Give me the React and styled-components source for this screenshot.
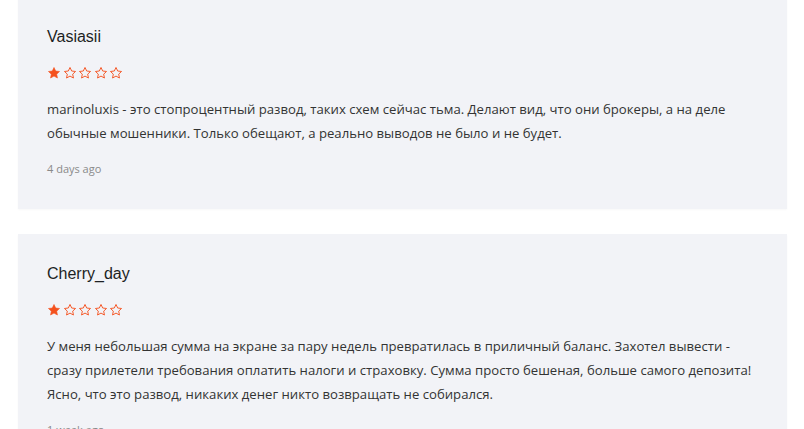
import React from "react"
import styled, { createGlobalStyle } from "styled-components"

const GlobalStyle = createGlobalStyle`
  body {
    margin: 0;
    background: #ffffff;
    font-family: "Open Sans", sans-serif;
  }
`

const ListStyles = styled.div`
  display: flex;
  flex-direction: column;
  gap: 25px;
  width: 769px;
  margin: -3px 0 0 18px;
`

const CardStyles = styled.div`
  background: #f2f3f7;
  padding: 30px 29px 32px 29px;
  box-shadow: 0 1px 2px rgba(0, 0, 0, 0.03);
`

const NameStyles = styled.div`
  font-family: "Liberation Sans", Arial, sans-serif;
  font-size: 16px;
  line-height: 20px;
  color: #1d1f23;
`

const StarsStyles = styled.div`
  display: flex;
  gap: 1.5px;
  height: 14px;
  margin-top: 19px;

  svg {
    width: 14px;
    height: 14px;
  }
`

const TextStyles = styled.p`
  margin: 17px 0 0;
  font-size: 13.15px;
  line-height: 24px;
  color: #333333;
`

const DateStyles = styled.div`
  margin-top: 16px;
  font-size: 11px;
  line-height: 16px;
  color: #8a8a8a;
`

const STAR = "M12 2.5l2.9 6.1 6.6.8-4.9 4.6 1.3 6.6L12 17.3l-5.9 3.3 1.3-6.6-4.9-4.6 6.6-.8z"

function Star({ filled }) {
  return (
    <svg viewBox="0 0 24 24">
      <path
        d={STAR}
        fill={filled ? "#f4511e" : "none"}
        stroke="#f4511e"
        strokeWidth={filled ? 1 : 1.6}
        strokeLinejoin="round"
      />
    </svg>
  )
}

const reviews = [
  {
    name: "Vasiasii",
    rating: 1,
    text: "marinoluxis - это стопроцентный развод, таких схем сейчас тьма. Делают вид, что они брокеры, а на деле обычные мошенники. Только обещают, а реально выводов не было и не будет.",
    date: "4 days ago",
  },
  {
    name: "Cherry_day",
    rating: 1,
    text: "У меня небольшая сумма на экране за пару недель превратилась в приличный баланс. Захотел вывести - сразу прилетели требования оплатить налоги и страховку. Сумма просто бешеная, больше самого депозита! Ясно, что это развод, никаких денег никто возвращать не собирался.",
    date: "1 week ago",
  },
]

export default function App() {
  return (
    <>
      <GlobalStyle />
      <ListStyles>
        {reviews.map(r => (
          <CardStyles key={r.name}>
            <NameStyles>{r.name}</NameStyles>
            <StarsStyles>
              {[1, 2, 3, 4, 5].map(i => (
                <Star key={i} filled={i <= r.rating} />
              ))}
            </StarsStyles>
            <TextStyles>{r.text}</TextStyles>
            <DateStyles>{r.date}</DateStyles>
          </CardStyles>
        ))}
      </ListStyles>
    </>
  )
}
